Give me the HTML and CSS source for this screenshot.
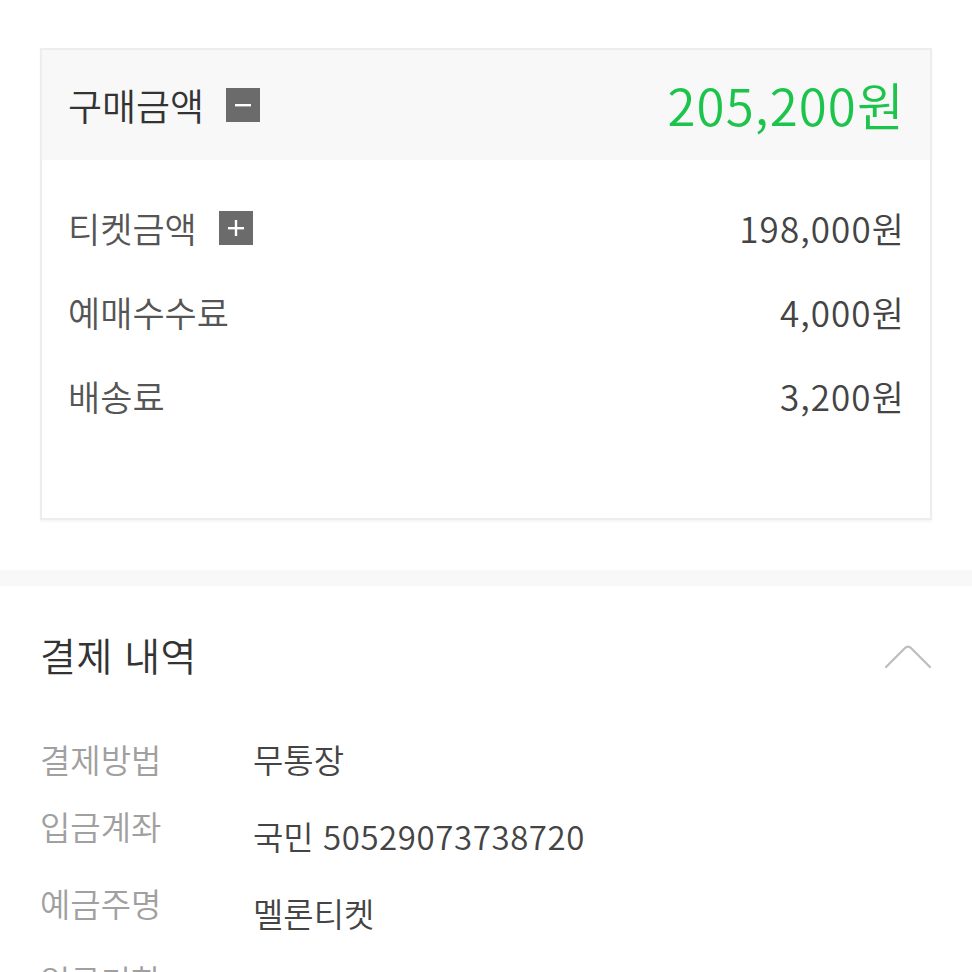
FILE: index.html
```html
<!DOCTYPE html>
<html lang="ko">
<head>
    <meta charset="UTF-8">
    <meta name="viewport" content="width=device-width, initial-scale=1.0">
    <title>결제 내역</title>
    <link rel="stylesheet" href="styles.css">
</head>
<body>
    <div class="summary">
        <div class="summary-head">
            <div class="summary-title">
                구매금액
                <span class="toggle-box">
                    <svg width="34" height="34" viewBox="0 0 34 34"><rect x="9" y="16" width="16" height="2.4" fill="#fff"/></svg>
                </span>
            </div>
            <div class="summary-total">205,200원</div>
        </div>
        <div class="summary-body">
            <div class="price-row">
                <div class="price-label">
                    티켓금액
                    <span class="toggle-box small">
                        <svg width="34" height="34" viewBox="0 0 34 34"><rect x="9" y="16" width="16" height="2.4" fill="#fff"/><rect x="15.8" y="9" width="2.4" height="16" fill="#fff"/></svg>
                    </span>
                </div>
                <div class="price-value">198,000원</div>
            </div>
            <div class="price-row">
                <div class="price-label">예매수수료</div>
                <div class="price-value">4,000원</div>
            </div>
            <div class="price-row">
                <div class="price-label">배송료</div>
                <div class="price-value">3,200원</div>
            </div>
        </div>
    </div>

    <div class="divider-band"></div>

    <section class="payment">
        <div class="payment-head">
            <h2 class="payment-title">결제 내역</h2>
            <svg class="chevron" width="48" height="26" viewBox="0 0 48 26">
                <path d="M2 24 L21 5 Q24 2 27 5 L46 24" fill="none" stroke="#bdbdbd" stroke-width="2.2" stroke-linecap="round"/>
            </svg>
        </div>
        <div class="detail-list">
            <div class="detail-row">
                <div class="detail-label">결제방법</div>
                <div class="detail-value">무통장</div>
            </div>
            <div class="detail-row offset">
                <div class="detail-label">입금계좌</div>
                <div class="detail-value">국민 <span class="digits">50529073738720</span></div>
            </div>
            <div class="detail-row offset">
                <div class="detail-label">예금주명</div>
                <div class="detail-value">멜론티켓</div>
            </div>
            <div class="detail-row offset">
                <div class="detail-label">입금기한</div>
                <div class="detail-value"></div>
            </div>
        </div>
    </section>
</body>
</html>
```

FILE: styles.css
```css
/* Reset and base styles */
* {
    margin: 0;
    padding: 0;
    box-sizing: border-box;
}
body {
    font-family: "Noto Sans CJK KR", "Noto Sans", sans-serif;
    font-weight: 350;
    color: #333;
    background-color: #fff;
    overflow: hidden;
}

/* Purchase summary box */
.summary {
    margin: 48px 40px 0;
    border: 2px solid #ededed;
    box-shadow: 0 2px 2px rgba(0,0,0,0.04);
}
.summary-head {
    display: flex;
    justify-content: space-between;
    align-items: center;
    height: 110px;
    padding: 0 25px 0 26px;
    background-color: #f8f8f8;
}
.summary-title {
    display: flex;
    align-items: center;
    gap: 22px;
    font-size: 37px;
    line-height: 1.2;
    color: #333;
}
.summary-total {
    font-size: 51px;
    line-height: 1.2;
    letter-spacing: 1.1px;
    color: #1cc44b;
}
.toggle-box {
    display: inline-flex;
    width: 34px;
    height: 34px;
    background-color: #6b6b6b;
}
.summary-body {
    padding: 26px 25px 80px 26px;
}
.price-row {
    display: flex;
    justify-content: space-between;
    align-items: center;
    height: 84px;
}
.price-label {
    display: flex;
    align-items: center;
    gap: 22px;
    font-size: 35px;
    line-height: 1.2;
    color: #555;
}
.price-value {
    font-size: 35px;
    line-height: 1.2;
    letter-spacing: 1.1px;
    color: #444;
}

/* Gray separator */
.divider-band {
    height: 16px;
    margin-top: 50px;
    background-color: #f8f8f8;
}

/* Payment details */
.payment {
    padding: 0 40px;
}
.payment-head {
    display: flex;
    justify-content: space-between;
    align-items: center;
    padding-top: 44px;
    height: 92px;
}
.payment-title {
    font-size: 39px;
    font-weight: 350;
    line-height: 48px;
    letter-spacing: 0.5px;
    color: #333;
}
.chevron {
    margin-top: 4px;
}
.detail-list {
    padding-top: 43px;
}
.detail-row {
    display: flex;
    align-items: center;
    height: 77px;
}
.detail-label {
    width: 213px;
    font-size: 33px;
    line-height: 1.2;
    color: #a0a0a0;
}
.detail-row.offset .detail-label {
    margin-top: -20px;
}
.detail-value {
    font-size: 33px;
    line-height: 1.2;
    color: #444;
}
.digits {
    letter-spacing: 0.6px;
}
```
